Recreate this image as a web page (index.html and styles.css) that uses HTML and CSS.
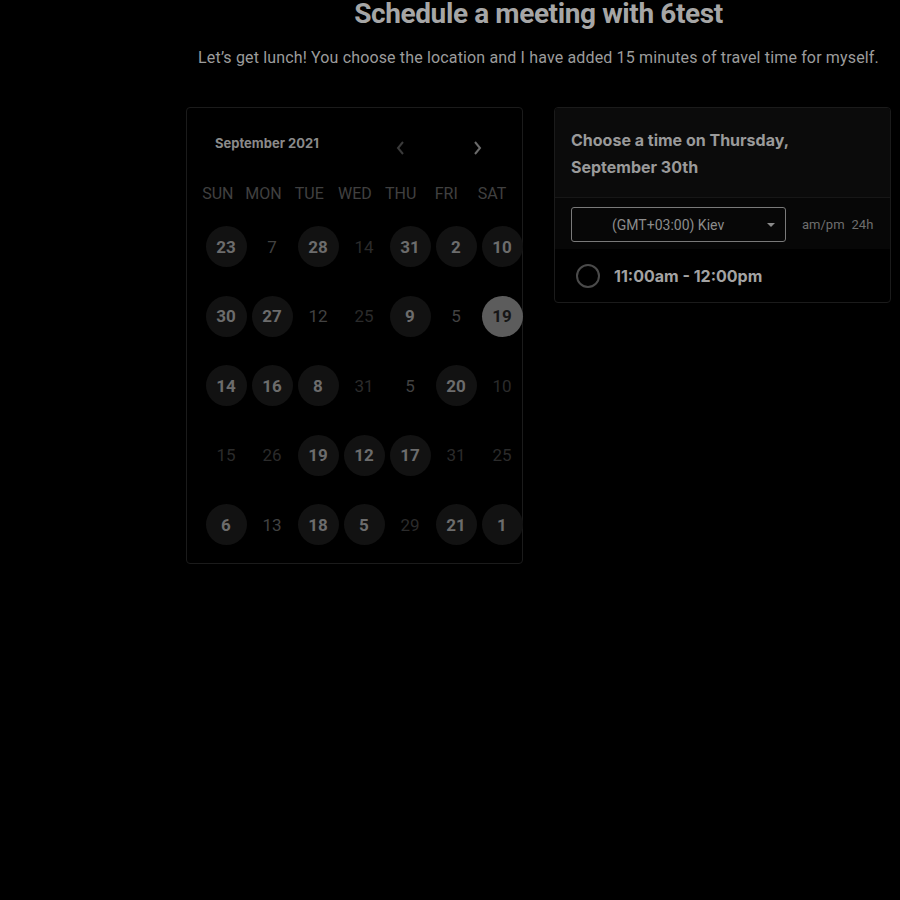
FILE: index.html
```html
<!DOCTYPE html>
<html>
<head>
<meta charset="utf-8">
<link rel="stylesheet" href="styles.css">
</head>
<body>
<main class="page">
  <h1 class="title">Schedule a meeting with 6test</h1>
  <p class="subtitle">Let’s get lunch! You choose the location and I have added 15 minutes of travel time for myself.</p>
  <div class="panels">
    <section class="card calendar">
      <div class="cal-head">
        <span class="month">September 2021</span>
        <div class="nav">
          <svg class="arrow" width="12" height="16" viewBox="0 0 12 16"><path d="M8 2 L3 8 L8 14" fill="none" stroke="#3a3a3a" stroke-width="2"/></svg>
          <svg class="arrow" width="12" height="16" viewBox="0 0 12 16"><path d="M4 2 L9 8 L4 14" fill="none" stroke="#6a6a6a" stroke-width="2"/></svg>
        </div>
      </div>
      <div class="weekdays">
        <span>SUN</span><span>MON</span><span>TUE</span><span>WED</span><span>THU</span><span>FRI</span><span>SAT</span>
      </div>
      <div class="days">
        <span class="d on">23</span><span class="d mid">7</span><span class="d on">28</span><span class="d dim">14</span><span class="d on">31</span><span class="d on">2</span><span class="d on">10</span>
        <span class="d on">30</span><span class="d on">27</span><span class="d mid">12</span><span class="d dim">25</span><span class="d on">9</span><span class="d mid">5</span><span class="d sel">19</span>
        <span class="d on">14</span><span class="d on">16</span><span class="d on">8</span><span class="d dim">31</span><span class="d mid">5</span><span class="d on">20</span><span class="d dim">10</span>
        <span class="d dim">15</span><span class="d dim">26</span><span class="d on">19</span><span class="d on">12</span><span class="d on">17</span><span class="d dim">31</span><span class="d dim">25</span>
        <span class="d on">6</span><span class="d mid">13</span><span class="d on">18</span><span class="d on">5</span><span class="d dim">29</span><span class="d on">21</span><span class="d on">1</span>
      </div>
    </section>
    <section class="card times">
      <div class="times-head">Choose a time on Thursday, September 30th</div>
      <div class="tz-row">
        <div class="tz-select">
          <span class="tz-text">(GMT+03:00) Kiev</span>
          <span class="caret"></span>
        </div>
        <div class="fmt"><span>am/pm</span><span>24h</span></div>
      </div>
      <div class="slot">
        <span class="radio"></span>
        <span class="slot-text">11:00am - 12:00pm</span>
      </div>
    </section>
  </div>
</main>
</body>
</html>
```

FILE: styles.css
```css
html, body {
  margin: 0;
  padding: 0;
  background: #000;
}
body {
  font-family: Roboto, "Liberation Sans", sans-serif;
  width: 900px;
  height: 900px;
  overflow: hidden;
}
.page {
  margin-left: 177px;
  width: 723px;
  display: flex;
  flex-direction: column;
  align-items: center;
}
.title {
  margin: 0;
  font-size: 28px;
  font-weight: 700;
  color: #a6a6a6;
  line-height: 28px;
  letter-spacing: -0.4px;
}
.subtitle {
  margin: 19px 0 0 0;
  font-size: 16px;
  color: #9c9c9c;
  line-height: 22px;
  letter-spacing: 0.15px;
}
.panels {
  margin-top: 38px;
  width: 705px;
  display: flex;
  gap: 31px;
  align-items: flex-start;
}
.card {
  width: 337px;
  box-sizing: border-box;
  border: 1px solid #1b1b1b;
  border-radius: 4px;
}
.calendar {
  height: 457px;
  padding: 0 0 0 16px;
}
.cal-head {
  display: flex;
  align-items: center;
  height: 70px;
  padding: 0 0 0 12px;
}
.month {
  font-family: Inter, Roboto, sans-serif;
  font-size: 13px;
  font-weight: 700;
  color: #8a8a8a;
  width: 180px;
  margin-top: 0;
}
.nav {
  display: flex;
  gap: 64px;
  margin-top: 10px;
}
.weekdays {
  display: grid;
  grid-template-columns: repeat(7, 45.7px);
  margin-left: -8px;
  height: 30px;
  align-items: center;
}
.weekdays span {
  text-align: center;
  font-size: 16px;
  color: #404040;
}
.days {
  display: grid;
  grid-template-columns: repeat(7, 46px);
  grid-auto-rows: 69.5px;
  margin-top: 4px;
}
.d {
  justify-self: center;
  align-self: center;
  width: 41px;
  height: 41px;
  border-radius: 50%;
  display: flex;
  align-items: center;
  justify-content: center;
  font-size: 17px;
}
.d.on {
  background: #121212;
  color: #6c6c6c;
  font-weight: 700;
}
.d.sel {
  background: #5c5c5c;
  color: #161616;
  font-weight: 700;
}
.d.mid {
  color: #424242;
}
.d.dim {
  color: #2b2b2b;
}
.times {
  overflow: hidden;
}
.times-head {
  background: #0b0b0b;
  padding: 19px 90px 16px 16px;
  font-family: Inter, Roboto, sans-serif;
  font-size: 16px;
  font-weight: 700;
  line-height: 27px;
  color: #9a9a9a;
  border-bottom: 1px solid #171717;
}
.tz-row {
  display: flex;
  align-items: center;
  padding: 9px 16px 7px 16px;
  background: #070707;
}
.tz-select {
  width: 215px;
  height: 35px;
  box-sizing: border-box;
  border: 1px solid #7a7a7a;
  border-radius: 3px;
  display: flex;
  align-items: center;
  position: relative;
}
.tz-text {
  margin-left: 40px;
  font-size: 14px;
  color: #8c8c8c;
}
.caret {
  position: absolute;
  right: 10px;
  top: 15px;
  width: 0;
  height: 0;
  border-left: 4px solid transparent;
  border-right: 4px solid transparent;
  border-top: 4px solid #8a8a8a;
}
.fmt {
  margin-left: 16px;
  display: flex;
  gap: 7px;
  font-size: 13px;
  color: #6e6e6e;
}
.slot {
  display: flex;
  align-items: center;
  height: 53px;
  padding-left: 21px;
}
.radio {
  width: 20px;
  height: 20px;
  border: 2px solid #4a4a4a;
  border-radius: 50%;
}
.slot-text {
  margin-left: 14px;
  font-family: Inter, Roboto, sans-serif;
  font-size: 16px;
  font-weight: 700;
  color: #a3a3a3;
}
```
